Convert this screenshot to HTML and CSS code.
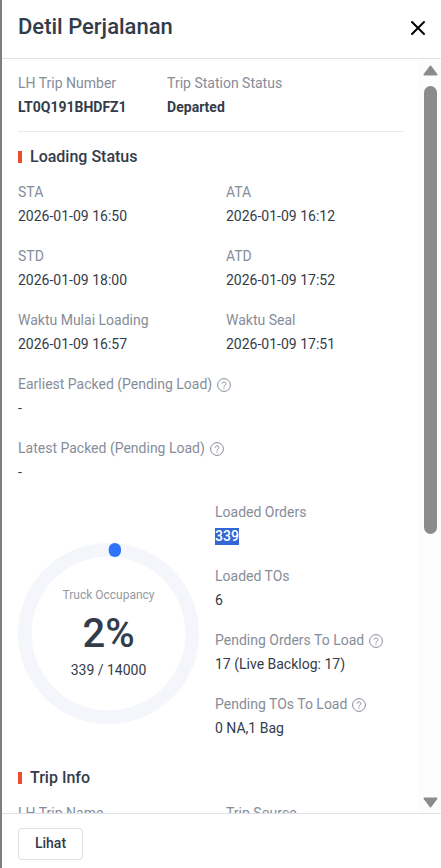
FILE: index.html
```html
<!DOCTYPE html>
<html lang="id">
<head>
<meta charset="utf-8">
<title>Detil Perjalanan</title>
<link rel="stylesheet" href="styles.css">
</head>
<body>
<svg width="0" height="0" class="defs">
  <symbol id="help" viewBox="0 0 14 14">
    <circle cx="7" cy="7" r="6.4" fill="none" stroke="currentColor" stroke-width="1"/>
    <path d="M5.2 5.7a1.8 1.8 0 1 1 2.8 1.5c-.7.4-1 .7-1 1.4" fill="none" stroke="currentColor" stroke-width="1"/>
    <circle cx="7" cy="10.2" r=".65" fill="currentColor"/>
  </symbol>
</svg>
<div class="drawer">
  <header class="header">
    <h1>Detil Perjalanan</h1>
    <svg class="close" width="16" height="16" viewBox="0 0 16 16"><path d="M2 2l12 12M14 2L2 14" stroke="#000" stroke-width="2" stroke-linecap="round"/></svg>
  </header>
  <div class="body">
    <main class="content">
      <section class="summary">
        <div class="field"><span class="label">LH Trip Number</span><strong>LT0Q191BHDFZ1</strong></div>
        <div class="field"><span class="label">Trip Station Status</span><strong>Departed</strong></div>
      </section>
      <h2>Loading Status</h2>
      <section class="grid">
        <div class="field"><span class="label">STA</span><span>2026-01-09 16:50</span></div>
        <div class="field"><span class="label">ATA</span><span>2026-01-09 16:12</span></div>
        <div class="field"><span class="label">STD</span><span>2026-01-09 18:00</span></div>
        <div class="field"><span class="label">ATD</span><span>2026-01-09 17:52</span></div>
        <div class="field"><span class="label">Waktu Mulai Loading</span><span>2026-01-09 16:57</span></div>
        <div class="field"><span class="label">Waktu Seal</span><span>2026-01-09 17:51</span></div>
        <div class="field wide"><span class="label">Earliest Packed (Pending Load)<svg class="help"><use href="#help"/></svg></span><span>-</span></div>
        <div class="field wide"><span class="label">Latest Packed (Pending Load)<svg class="help"><use href="#help"/></svg></span><span>-</span></div>
      </section>
      <section class="load">
        <div class="gauge">
          <svg class="ring" viewBox="0 0 181 181"><circle cx="90.5" cy="90.5" r="83.7" fill="none" stroke="#f4f6fb" stroke-width="13.6"/><rect x="90.7" y="0" width="12.3" height="14" rx="6.1" fill="#2f73f8"/></svg>
          <span class="gauge-label">Truck Occupancy</span>
          <span class="percent">2%</span>
          <span class="ratio">339 / 14000</span>
        </div>
        <div class="stats">
          <div class="field"><span class="label">Loaded Orders</span><span><mark>339</mark></span></div>
          <div class="field"><span class="label">Loaded TOs</span><span>6</span></div>
          <div class="field"><span class="label">Pending Orders To Load<svg class="help"><use href="#help"/></svg></span><span>17 (Live Backlog: 17)</span></div>
          <div class="field"><span class="label">Pending TOs To Load<svg class="help"><use href="#help"/></svg></span><span>0 NA,1 Bag</span></div>
        </div>
      </section>
      <h2>Trip Info</h2>
      <section class="grid">
        <div class="field"><span class="label">LH Trip Name</span></div>
        <div class="field"><span class="label">Trip Source</span></div>
      </section>
    </main>
    <div class="scrollbar">
      <svg width="15" height="11" viewBox="0 0 15 11"><path d="M7.5 1.5L13.5 9.5H1.5Z" fill="#8b8b8b" stroke="#8b8b8b" stroke-width="2" stroke-linejoin="round"/></svg>
      <div class="thumb"></div>
      <svg class="down" width="15" height="11" viewBox="0 0 15 11"><path d="M7.5 9.5L13.5 1.5H1.5Z" fill="#8b8b8b" stroke="#8b8b8b" stroke-width="2" stroke-linejoin="round"/></svg>
    </div>
  </div>
  <footer class="footer"><button>Lihat</button></footer>
</div>
</body>
</html>
```
FILE: styles.css
```css
* { box-sizing: border-box; }
body {
  margin: 0;
  background: #fff;
  color: #333c4a;
  font: 14px/24px Roboto, "Liberation Sans", sans-serif;
}
.defs { display: block; }
.drawer {
  height: 868px;
  border-left: 2px solid #7f7f7f;
  display: flex;
  flex-direction: column;
  overflow: hidden;
}
.header {
  flex: none;
  height: 59px;
  padding: 0 15px 4px 16px;
  border-bottom: 1px solid #e0e1ea;
  display: flex;
  align-items: center;
  justify-content: space-between;
}
h1 { margin: 0; font-size: 22px; font-weight: 500; line-height: 32px; }
.close { margin-top: 2px; }
.body { flex: 1; min-height: 0; display: flex; overflow: hidden; }
.content { flex: 1; min-width: 0; padding: 12px 15px 0 16px; }
.field { display: flex; flex-direction: column; height: 48px; }
.label { color: #868d99; display: flex; align-items: center; }
.help { width: 14px; height: 14px; margin: 2px 0 0 5px; }
strong { font-weight: 700; }
.summary {
  display: flex;
  gap: 40.5px;
  height: 61px;
  border-bottom: 1px solid #ebebef;
}
h2 {
  margin: 13px 0 11px;
  font-size: 16px;
  font-weight: 500;
  line-height: 24px;
  display: flex;
  align-items: center;
}
h2::before { content: ""; width: 4px; height: 12px; margin-right: 8px; background: #ee4d2d; }
.grid { display: grid; grid-template-columns: 208px 1fr; row-gap: 16px; }
.wide { grid-column: 1 / -1; }
.load { display: flex; margin: 16px 0 26px; height: 240px; }
.gauge {
  position: relative;
  width: 181px;
  height: 181px;
  margin: 43px 16px 0 0;
  display: flex;
  flex-direction: column;
  align-items: center;
  padding-top: 42px;
}
.ring { position: absolute; inset: 0; }
.gauge-label { font-size: 12px; line-height: 20px; color: #9599a3; }
.percent { font-size: 40px; font-weight: 500; line-height: 54px; padding-top: 2px; }
.ratio { line-height: 20px; margin-top: -1px; }
.stats { display: grid; row-gap: 16px; align-content: start; }
mark { background: #3367d6; color: #fff; font-weight: 500; padding-bottom: 1px; }
.scrollbar {
  width: 22px;
  background: #fcfcfc;
  display: flex;
  flex-direction: column;
  align-items: center;
  padding: 6px 0 5px;
}
.thumb { width: 13px; height: 448px; margin-top: 10px; border-radius: 7px; background: #8b8b8b; }
.down { margin-top: auto; }
.footer {
  flex: none;
  height: 55px;
  border-top: 1px solid #e0e1ea;
  padding: 14px 16px;
  display: flex;
}
button {
  width: 65px;
  height: 32px;
  padding: 0 0 2px;
  border: 1px solid #dfe1ea;
  border-radius: 4px;
  background: #fff;
  color: inherit;
  font: 500 14px/28px Roboto, "Liberation Sans", sans-serif;
}
```
